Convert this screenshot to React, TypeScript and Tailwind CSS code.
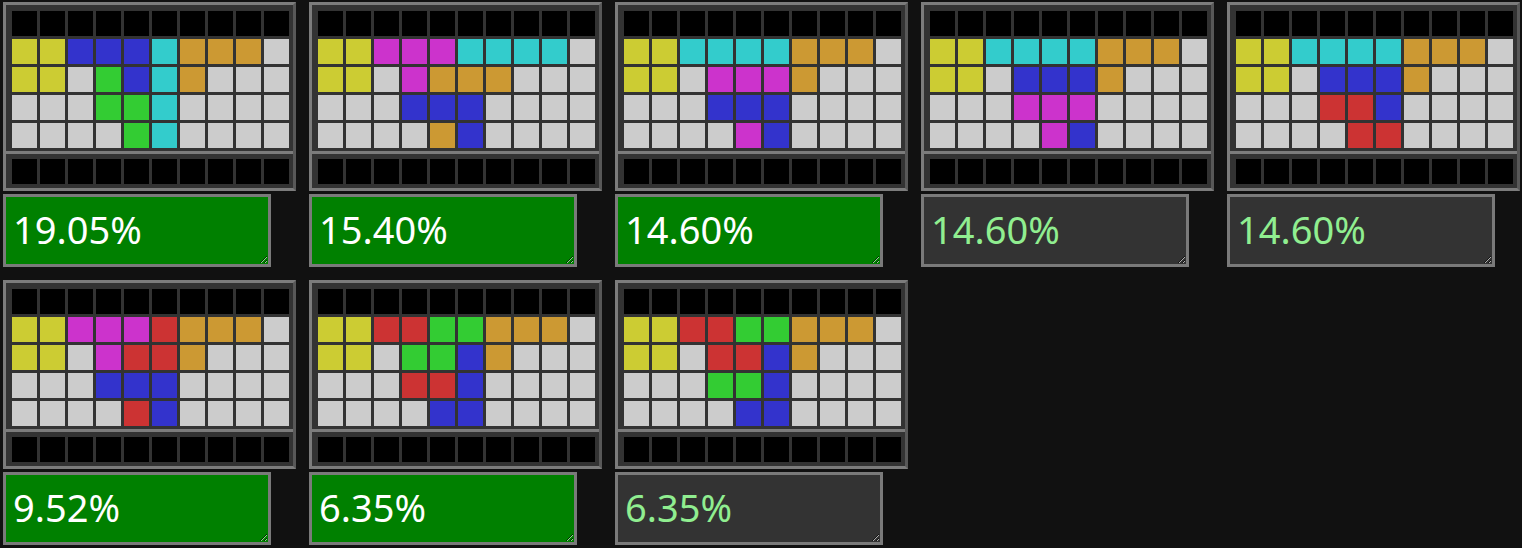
// Piece-placement results: each card shows a board preview and its score.
const COLORS: Record<string, string> = {
  Y: "bg-[#cccc33]",
  B: "bg-[#3333cc]",
  C: "bg-[#33cccc]",
  O: "bg-[#cc9933]",
  G: "bg-[#33cc33]",
  M: "bg-[#cc33cc]",
  R: "bg-[#cc3333]",
  E: "bg-[#cccccc]",
  K: "bg-black",
};

type Result = { rows: string[]; score: string; best: boolean };

const RESULTS: Result[] = [
  { rows: ["YYBBBCOOOE", "YYEGBCOEEE", "EEEGGCEEEE", "EEEEGCEEEE"], score: "19.05%", best: true },
  { rows: ["YYMMMCCCCE", "YYEMOOOEEE", "EEEBBBEEEE", "EEEEOBEEEE"], score: "15.40%", best: true },
  { rows: ["YYCCCCOOOE", "YYEMMMOEEE", "EEEBBBEEEE", "EEEEMBEEEE"], score: "14.60%", best: true },
  { rows: ["YYCCCCOOOE", "YYEBBBOEEE", "EEEMMMEEEE", "EEEEMBEEEE"], score: "14.60%", best: false },
  { rows: ["YYCCCCOOOE", "YYEBBBOEEE", "EEERRBEEEE", "EEEERREEEE"], score: "14.60%", best: false },
  { rows: ["YYMMMROOOE", "YYEMRROEEE", "EEEBBBEEEE", "EEEERBEEEE"], score: "9.52%", best: true },
  { rows: ["YYRRGGOOOE", "YYEGGBOEEE", "EEERRBEEEE", "EEEEBBEEEE"], score: "6.35%", best: true },
  { rows: ["YYRRGGOOOE", "YYERRBOEEE", "EEEGGBEEEE", "EEEEBBEEEE"], score: "6.35%", best: false },
];

function Cells({ rows }: { rows: string[] }) {
  return (
    <div className="grid grid-cols-[repeat(10,25px)] auto-rows-[25px] gap-[3px]">
      {rows.flatMap((row, r) =>
        row.split("").map((c, i) => <div key={`${r}-${i}`} className={COLORS[c]} />)
      )}
    </div>
  );
}

function Card({ result }: { result: Result }) {
  return (
    <div className="flex flex-col items-start gap-[3px]">
      <div className="w-[293px] border-[3px] border-[#7c7c7c] border-r-[#585858] bg-[#333333]">
        <div className="pt-[6px] pl-[6px] pr-[4px] pb-[3px]">
          <Cells rows={["KKKKKKKKKK", ...result.rows]} />
        </div>
        <div className="border-t-[3px] border-[#7c7c7c] pt-[5px] pl-[6px] pr-[4px] pb-[4px]">
          <Cells rows={["KKKKKKKKKK"]} />
        </div>
      </div>
      <textarea
        readOnly
        defaultValue={result.score}
        className={`block h-[73px] w-[268px] overflow-hidden border-[3px] border-[#7a7a7a] px-[7px] pt-[4px] text-[38px] leading-normal font-['Noto_Sans',sans-serif] outline-none [color-scheme:dark] ${
          result.best ? "bg-[#008000] text-white" : "bg-[#333333] text-[#90ee90]"
        }`}
      />
    </div>
  );
}

export default function App() {
  return (
    <div className="min-h-screen w-full bg-[#111111] pt-[2px] pl-[3px]">
      <div className="grid grid-cols-[repeat(5,293px)] gap-x-[13px] gap-y-[13px]">
        {RESULTS.map((r, i) => (
          <Card key={i} result={r} />
        ))}
      </div>
    </div>
  );
}
